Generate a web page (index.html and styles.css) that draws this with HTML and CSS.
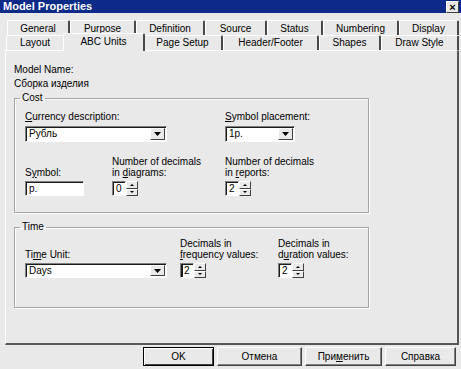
FILE: index.html
```html
<!DOCTYPE html>
<html lang="ru">
<head>
  <meta charset="UTF-8">
  <title>Model Properties</title>
  <link rel="stylesheet" href="styles.css">
</head>
<body>
  <div class="titlebar">
    <span class="title">Model Properties</span>
    <span class="close">&#215;</span>
  </div>

  <!-- Tab strip, two rows -->
  <div class="tabs">
    <div class="tabrow row1">
      <div class="tab w63">General</div>
      <div class="tab w66">Purpose</div>
      <div class="tab w69">Definition</div>
      <div class="tab w62">Source</div>
      <div class="tab w56">Status</div>
      <div class="tab w76">Numbering</div>
      <div class="tab w60">Display</div>
    </div>
    <div class="tabrow row2">
      <div class="tab w59">Layout</div>
      <div class="tab active">ABC Units</div>
      <div class="tab w80">Page Setup</div>
      <div class="tab w96">Header/Footer</div>
      <div class="tab w62">Shapes</div>
      <div class="tab w78">Draw Style</div>
    </div>
  </div>

  <div class="panel">
    <div class="line">Model Name:</div>
    <div class="line">Сборка изделия</div>

    <fieldset class="group cost">
      <legend>Cost</legend>
      <div class="grid cost-top">
        <div class="cell span2">
          <div class="label"><u>C</u>urrency description:</div>
          <div class="combo w142">
            <span class="combo-text">Рубль</span>
            <span class="combo-btn"><svg width="7" height="4" viewBox="0 0 7 4"><path d="M0 0h7L3.5 4z" fill="#000"/></svg></span>
          </div>
        </div>
        <div class="cell">
          <div class="label"><u>S</u>ymbol placement:</div>
          <div class="combo w70">
            <span class="combo-text">1р.</span>
            <span class="combo-btn"><svg width="7" height="4" viewBox="0 0 7 4"><path d="M0 0h7L3.5 4z" fill="#000"/></svg></span>
          </div>
        </div>
      </div>
      <div class="grid cost-bottom">
        <div class="cell">
          <div class="label">S<u>y</u>mbol:</div>
          <div class="edit w59">р.</div>
        </div>
        <div class="cell">
          <div class="label">Number of decimals<br>in <u>d</u>iagrams:</div>
          <div class="spin">
            <span class="spin-val">0</span>
            <span class="spin-btns"><span class="up"></span><span class="down"></span></span>
          </div>
        </div>
        <div class="cell">
          <div class="label">Number of decimals<br>in <u>r</u>eports:</div>
          <div class="spin">
            <span class="spin-val">2</span>
            <span class="spin-btns"><span class="up"></span><span class="down"></span></span>
          </div>
        </div>
      </div>
    </fieldset>

    <fieldset class="group time">
      <legend>Time</legend>
      <div class="grid time-row">
        <div class="cell">
          <div class="label">Ti<u>m</u>e Unit:</div>
          <div class="combo w142">
            <span class="combo-text">Days</span>
            <span class="combo-btn"><svg width="7" height="4" viewBox="0 0 7 4"><path d="M0 0h7L3.5 4z" fill="#000"/></svg></span>
          </div>
        </div>
        <div class="cell">
          <div class="label">Decimals in<br><u>f</u>requency values:</div>
          <div class="spin">
            <span class="spin-val focus">2</span>
            <span class="spin-btns"><span class="up"></span><span class="down"></span></span>
          </div>
        </div>
        <div class="cell">
          <div class="label">Decimals in<br>d<u>u</u>ration values:</div>
          <div class="spin">
            <span class="spin-val">2</span>
            <span class="spin-btns"><span class="up"></span><span class="down"></span></span>
          </div>
        </div>
      </div>
    </fieldset>
  </div>

  <div class="buttons">
    <button class="btn default w71">OK</button>
    <button class="btn w85">Отмена</button>
    <button class="btn w77">При<u>м</u>енить</button>
    <button class="btn w71">Справка</button>
  </div>
</body>
</html>
```

FILE: styles.css
```css
body {
  margin: 0;
  width: 461px;
  height: 369px;
  overflow: hidden;
  background: #e9e9e9;
  color: #000;
  font-family: "Liberation Sans", Arial, sans-serif;
  font-size: 10px;
}

/* title bar */
.titlebar {
  display: flex;
  justify-content: space-between;
  align-items: center;
  height: 13px;
  padding: 0 2px 0 3px;
  background: #0c2a88;
}
.title {
  color: #fff;
  font-weight: bold;
  font-size: 11px;
  line-height: 13px;
}
.close {
  width: 11px;
  height: 10px;
  background: #e9e9e9;
  border: 1px solid;
  border-color: #fff #404040 #404040 #fff;
  font-size: 11px;
  font-weight: bold;
  line-height: 10px;
  text-align: center;
}

/* tabs */
.tabs {
  padding-top: 7px;
}
.tabrow {
  display: flex;
  height: 15px;
}
.row1 {
  padding-left: 7px;
}
.row2 {
  padding-left: 6px;
}
.tab {
  box-sizing: border-box;
  height: 15px;
  border-top: 1px solid #fff;
  border-left: 1px solid #fff;
  border-right: 2px solid #4a4a4a;
  border-radius: 2px 2px 0 0;
  text-align: center;
  line-height: 12px;
  white-space: nowrap;
}
.row1 .tab {
  padding-top: 2px;
}
.row2 .tab {
  padding-top: 1px;
}
.row2 .tab.active {
  position: relative;
  z-index: 1;
  width: 82px;
  height: 18px;
  margin: -2px -2px -1px;
  padding-top: 2px;
  background: #e9e9e9;
}
.w56 { width: 56px; }
.w59 { width: 59px; }
.w60 { width: 60px; }
.w62 { width: 62px; }
.w63 { width: 63px; }
.w66 { width: 66px; }
.w69 { width: 69px; }
.w70 { width: 70px; }
.w71 { width: 71px; }
.w76 { width: 76px; }
.w77 { width: 77px; }
.w78 { width: 78px; }
.w80 { width: 80px; }
.w85 { width: 85px; }
.w96 { width: 96px; }
.w142 { width: 142px; }

/* tab page */
.panel {
  box-sizing: border-box;
  width: 454px;
  height: 295px;
  margin-left: 5px;
  padding: 12px 0 0 8px;
  border-top: 1px solid #fff;
  border-left: 1px solid #fff;
  border-right: 2px solid #555;
  border-bottom: 2px solid #555;
}
.line {
  line-height: 14px;
}

/* group boxes */
.group {
  box-sizing: border-box;
  width: 355px;
  min-width: 0;
  margin: 0;
  border: 1px solid #a4a4a4;
  box-shadow: 1px 1px 0 #fff, inset 1px 1px 0 #fff;
}
.group legend {
  margin-left: -5px;
  padding: 0 2px;
  line-height: 12px;
}
.cost {
  margin-top: 1px;
  padding: 7px 0 16px 10px;
}
.time {
  margin-top: 8px;
  padding: 5px 0 29px 10px;
}
.grid {
  display: grid;
  align-items: end;
}
.cost-top,
.cost-bottom {
  grid-template-columns: 87px 113px auto;
}
.cost-bottom {
  margin-top: 14px;
}
.time-row {
  grid-template-columns: 155px 98px auto;
}
.span2 {
  grid-column: span 2;
}
.label {
  line-height: 11px;
  white-space: nowrap;
}
.cost-top .label {
  margin-bottom: 4px;
}
.cost-bottom .label,
.time-row .label {
  margin-bottom: 3px;
}

/* controls */
.combo {
  box-sizing: border-box;
  display: flex;
  height: 16px;
  background: #fff;
  border: 1px solid;
  border-color: #808080 #fff #fff #808080;
  box-shadow: inset 1px 1px 0 #1a1a1a;
}
.cost-bottom .combo,
.time-row .combo {
  height: 15px;
}
.combo-text {
  padding-left: 3px;
  line-height: 13px;
}
.combo-btn {
  box-sizing: border-box;
  display: flex;
  align-items: center;
  justify-content: center;
  width: 15px;
  margin: 1px 1px 1px auto;
  background: #e9e9e9;
  border: 1px solid;
  border-color: #fff #404040 #404040 #fff;
}
.edit {
  box-sizing: border-box;
  height: 15px;
  padding-left: 3px;
  line-height: 13px;
  background: #fff;
  border: 1px solid;
  border-color: #808080 #fff #fff #808080;
  box-shadow: inset 1px 1px 0 #1a1a1a;
}
.spin {
  display: flex;
  width: 26px;
  height: 15px;
}
.spin-val {
  box-sizing: border-box;
  width: 14px;
  padding-left: 3px;
  line-height: 13px;
  background: #fff;
  border: 1px solid;
  border-color: #808080 #fff #fff #808080;
  box-shadow: inset 1px 1px 0 #1a1a1a;
}
.spin-val.focus {
  box-shadow: inset 2px 1px 0 #1a1a1a;
}
.spin-btns {
  display: flex;
  flex-direction: column;
  width: 12px;
}
.spin-btns span {
  box-sizing: border-box;
  display: flex;
  align-items: center;
  justify-content: center;
  flex: 1;
  border: 1px solid;
  border-color: #fff #404040 #404040 #fff;
}
.spin-btns span::before {
  content: "";
  border-left: 2px solid transparent;
  border-right: 2px solid transparent;
}
.spin-btns .up::before {
  border-bottom: 2px solid #000;
}
.spin-btns .down::before {
  border-top: 2px solid #000;
}

/* dialog buttons */
.buttons {
  display: flex;
  justify-content: flex-end;
  gap: 3px;
  margin-top: 2px;
  padding-right: 5px;
}
.btn {
  box-sizing: border-box;
  height: 19px;
  padding: 0;
  background: #e9e9e9;
  border: 1px solid;
  border-color: #fff #404040 #404040 #fff;
  box-shadow: inset -1px -1px 0 #808080;
  color: #000;
  font-family: inherit;
  font-size: 10px;
}
.btn.default {
  border: 1px solid #000;
  box-shadow: inset 1px 1px 0 #fff, inset -1px -1px 0 #404040;
}
```
